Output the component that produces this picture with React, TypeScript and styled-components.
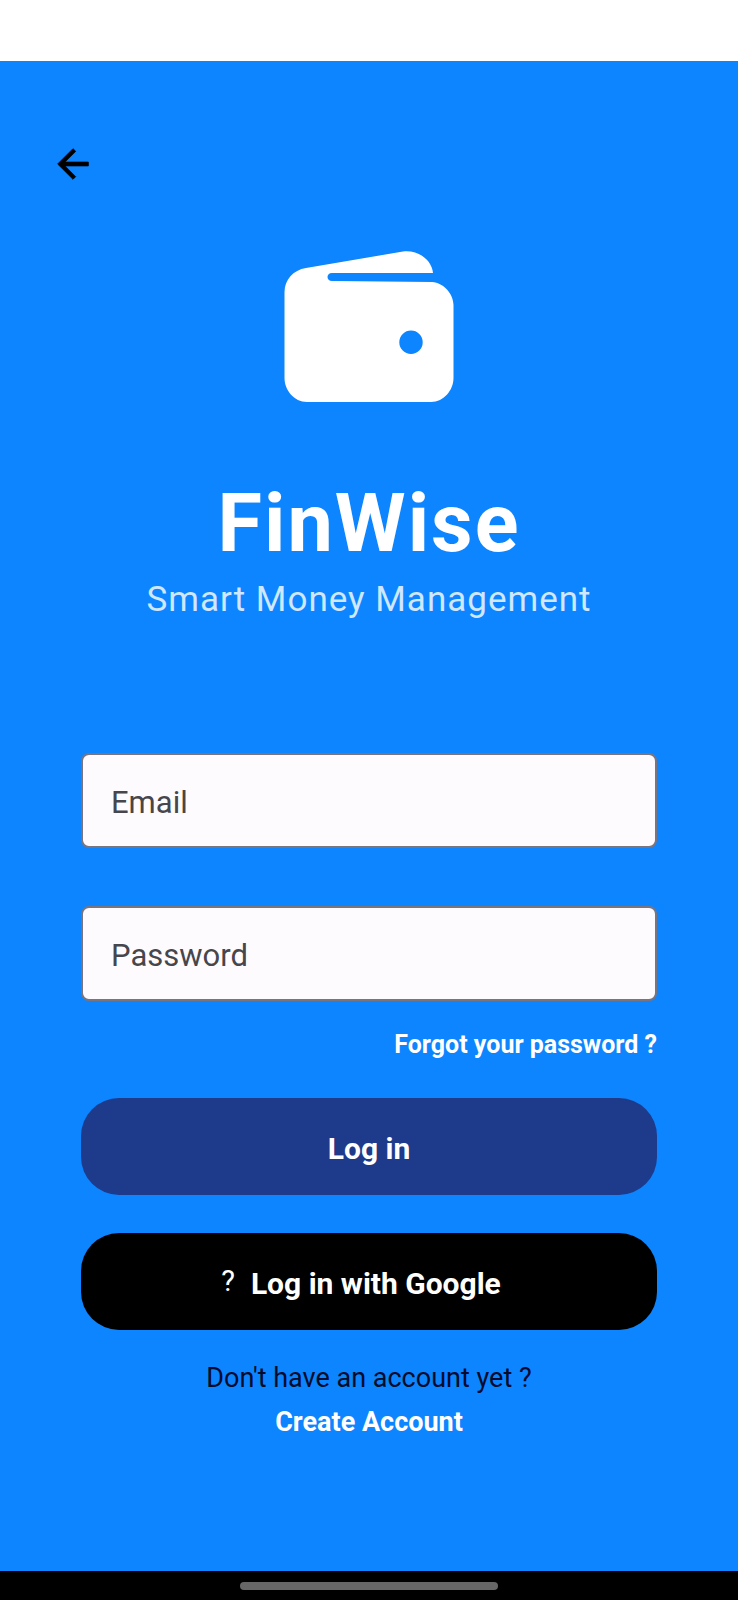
import React from "react";
import styled, { createGlobalStyle } from "styled-components";

const GlobalStyle = createGlobalStyle`
  *, *::before, *::after { box-sizing: border-box; }
  body {
    margin: 0;
    background: #0d85ff;
    font-family: Roboto, "Liberation Sans", sans-serif;
  }
  h1, p { margin: 0; }
`;

const Screen = styled.div`
  display: flex;
  flex-direction: column;
  min-height: 100vh;
  background: #0d85ff;
`;

const StatusBar = styled.div`
  height: 61px;
  flex: none;
  background: #ffffff;
`;

const Content = styled.main`
  flex: 1;
  display: flex;
  flex-direction: column;
  padding: 80px 81px 48px;
`;

const TopBar = styled.header`
  display: flex;
  margin: 0 -31px;
`;

const BackButton = styled.button`
  display: flex;
  padding: 0;
  border: 0;
  background: none;
  color: #000000;
  cursor: pointer;
`;

const Brand = styled.section`
  display: flex;
  flex-direction: column;
  align-items: center;
  margin-top: 64px;
  text-align: center;
`;

const Title = styled.h1`
  margin-top: 74px;
  font-size: 81px;
  line-height: 96px;
  font-weight: 700;
  letter-spacing: 2px;
  color: #ffffff;
`;

const Tagline = styled.p`
  margin-top: 8px;
  font-size: 35px;
  line-height: 40px;
  letter-spacing: 1px;
  color: #cfe7ff;
`;

const Form = styled.form`
  display: flex;
  flex-direction: column;
  margin-top: 133px;
`;

const Field = styled.input`
  width: 100%;
  height: 95px;
  padding: 4px 28px 0;
  border: 2px solid #79747e;
  border-radius: 8px;
  background: #fefbff;
  font-family: inherit;
  font-size: 31px;
  color: #1b1b1f;
  outline: none;

  & + & { margin-top: 58px; }
  &::placeholder { color: #46464c; opacity: 1; }
`;

const TextLink = styled.a<{ $size: number }>`
  font-size: ${(p) => p.$size}px;
  line-height: 32px;
  font-weight: 700;
  color: #ffffff;
  text-decoration: none;
`;

const ForgotRow = styled.div`
  display: flex;
  justify-content: flex-end;
  margin: 28px 0 37px;
`;

const PillButton = styled.button<{ $color: string }>`
  display: flex;
  align-items: center;
  justify-content: center;
  height: 97px;
  padding: 4px 24px 0;
  border: 0;
  border-radius: 38px;
  background: ${(p) => p.$color};
  color: #ffffff;
  font-family: inherit;
  font-size: 30px;
  line-height: 34px;
  font-weight: 700;
  cursor: pointer;

  & + & { margin-top: 38px; }
`;

const ProviderMark = styled.span`
  padding-bottom: 6px;
  font-size: 29px;
  font-weight: 400;
`;

const ProviderLabel = styled.span`
  margin: 0 16px;
`;

const SignUp = styled.section`
  display: flex;
  flex-direction: column;
  align-items: center;
  gap: 12px;
  margin-top: 32px;
`;

const Prompt = styled.p`
  font-size: 27px;
  line-height: 32px;
  color: #020b2c;
`;

const NavBar = styled.footer`
  display: flex;
  justify-content: center;
  flex: none;
  height: 29px;
  padding-top: 11px;
  background: #000000;
`;

const Handle = styled.div`
  width: 35%;
  height: 8px;
  border-radius: 4px;
  background: #666666;
`;

const ArrowBack = () => (
  <svg
    width="46"
    height="46"
    viewBox="0 0 24 24"
    fill="currentColor"
    stroke="currentColor"
    strokeWidth="0.4"
    aria-hidden="true"
  >
    <path d="M20 11H7.83l5.59-5.59L12 4l-8 8 8 8 1.41-1.41L7.83 13H20v-2z" />
  </svg>
);

const Wallet = () => (
  <svg width="170" height="151" viewBox="0 0 170 151" aria-hidden="true">
    <path
      fill="#ffffff"
      fillRule="evenodd"
      d="M22 17L119 0.5C134-1.5 148 9 149 22H48C42 22 42 30 48 30L148 31C160 32 169.500 43 169.500 54V127C169.500 139 160 151 147 151H23C10 151 0.500 139 0.500 127V41C0.500 29 9 19 22 17ZM127 79.500A11.700 11.700 0 1 0 127 102.900A11.700 11.700 0 1 0 127 79.500Z"
    />
  </svg>
);

export default function App() {
  return (
    <>
      <GlobalStyle />
      <Screen>
        <StatusBar />
        <Content>
          <TopBar>
            <BackButton type="button" aria-label="Back">
              <ArrowBack />
            </BackButton>
          </TopBar>
          <Brand>
            <Wallet />
            <Title>FinWise</Title>
            <Tagline>Smart Money Management</Tagline>
          </Brand>
          <Form onSubmit={(e) => e.preventDefault()}>
            <Field type="email" placeholder="Email" aria-label="Email" />
            <Field type="password" placeholder="Password" aria-label="Password" />
            <ForgotRow>
              <TextLink href="#forgot" $size={25}>Forgot your password ?</TextLink>
            </ForgotRow>
            <PillButton type="submit" $color="#1e3a8a">Log in</PillButton>
            <PillButton type="button" $color="#000000">
              <ProviderMark>?</ProviderMark>
              <ProviderLabel>Log in with Google</ProviderLabel>
            </PillButton>
          </Form>
          <SignUp>
            <Prompt>Don't have an account yet ?</Prompt>
            <TextLink href="#register" $size={27}>Create Account</TextLink>
          </SignUp>
        </Content>
        <NavBar>
          <Handle />
        </NavBar>
      </Screen>
    </>
  );
}
